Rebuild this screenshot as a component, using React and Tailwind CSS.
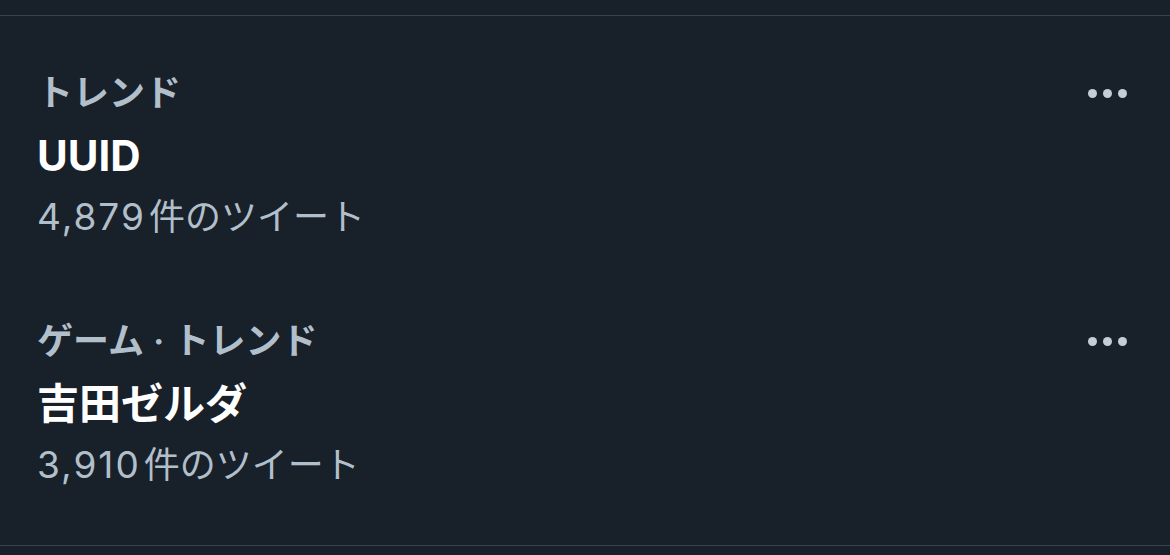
import React from "react";

const trends = [
  { label: "トレンド", title: "UUID", num: "4,879", rest: "件のツイート" },
  { label: "ゲーム · トレンド", title: "吉田ゼルダ", num: "3,910", rest: "件のツイート" },
];

function MoreDots() {
  return (
    <div className="self-start h-[62px] flex items-center gap-[6px]">
      <span className="w-[9px] h-[9px] rounded-full bg-[#c3ced8]" />
      <span className="w-[9px] h-[9px] rounded-full bg-[#c3ced8]" />
      <span className="w-[9px] h-[9px] rounded-full bg-[#c3ced8]" />
    </div>
  );
}

export default function App() {
  return (
    <div
      className="w-[1170px] h-[555px] bg-[#18202a] overflow-hidden"
      style={{ fontFamily: 'Inter, "Noto Sans CJK JP", sans-serif' }}
    >
      <div className="h-[16px] border-b border-[#38444d]" />
      <div className="pt-[15px] pb-[18px] border-b border-[#38444d]">
        {trends.map((t) => (
          <div key={t.title} className="flex justify-between pl-[37px] pr-[43px] py-[31px]">
            <div className="flex flex-col">
              <div className="h-[62px] flex items-center text-[36px] font-semibold text-[#b1bfca]">
                {t.label}
              </div>
              <div className="h-[62px] flex items-center text-[42px] font-bold text-white">
                {t.title}
              </div>
              <div className="h-[62px] flex items-center text-[36px] text-[#b1bfca]">
                <span className="text-[37px] tracking-[2px]">{t.num}</span>
                <span className="ml-[3px]">{t.rest}</span>
              </div>
            </div>
            <MoreDots />
          </div>
        ))}
      </div>
    </div>
  );
}
